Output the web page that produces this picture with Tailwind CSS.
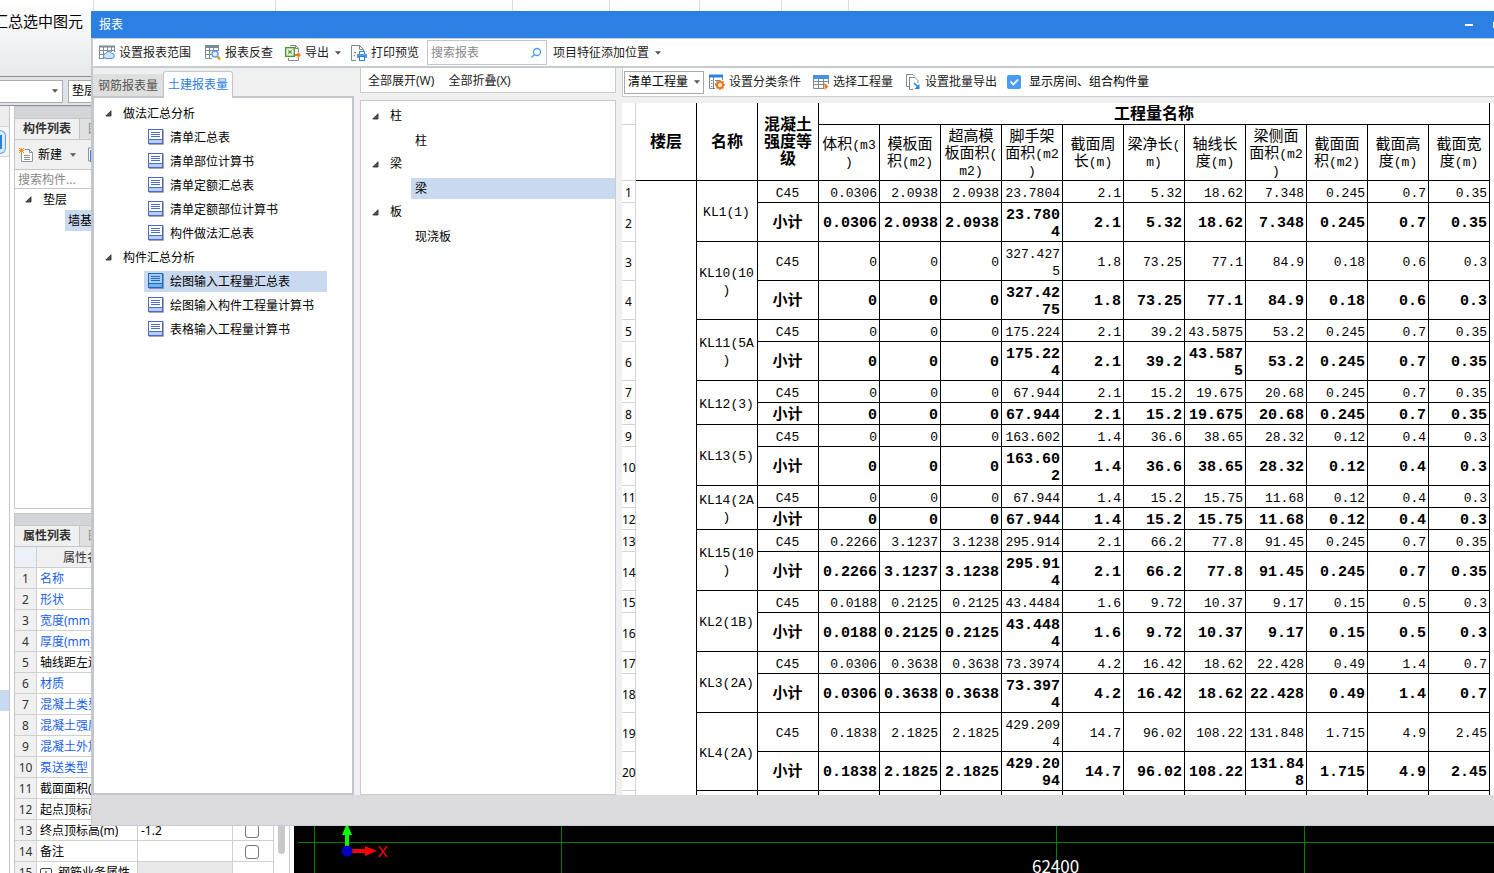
<!DOCTYPE html>
<html lang="zh-CN">
<head>
<meta charset="utf-8">
<title>报表</title>
<script src="https://cdn.jsdelivr.net/npm/@tailwindcss/browser@4"></script>
</head>
<body class="relative flex h-screen flex-col overflow-hidden bg-white font-['Noto_Sans','Noto_Sans_CJK_SC',sans-serif] text-xs leading-4 text-black">

<svg class="hidden">
  <symbol id="doc" viewBox="0 0 16 16">
    <path d="M15.500 1v14.500H1" fill="none" stroke="#a8a8a8"/>
    <rect x=".5" y=".5" width="14" height="14" fill="#fff" stroke="#4a6cc8"/>
    <rect x="1" y="10" width="13" height="4" fill="#b9ccff"/>
    <path d="M1 10.500h13M3 3.500h9M3 5.500h9M3 7.500h9" stroke="#4a6cc8"/>
  </symbol>
  <symbol id="doc-on" viewBox="0 0 16 16">
    <path d="M15.500 1v14.500H1" fill="none" stroke="#8096b4"/>
    <rect x=".5" y=".5" width="14" height="14" fill="#9fcbf5" stroke="#2468be"/>
    <rect x="1" y="10" width="13" height="4" fill="#6fb0f2"/>
    <path d="M1 10.500h13M3 3.500h9M3 5.500h9M3 7.500h9" stroke="#2468be"/>
  </symbol>
  <symbol id="open" viewBox="0 0 7 7"><path d="M6 .8v5.200H.8z" fill="#555" stroke="#222" stroke-width=".8"/></symbol>
  <symbol id="caret" viewBox="0 0 6 4"><path d="M0 .3h6L3 3.700z" fill="#555"/></symbol>
</svg>

<!-- main window: ribbon -->
<div class="flex h-[76px] flex-none bg-linear-to-b from-white to-[#e6eaed]">
  <div class="flex w-[83px] flex-none justify-end overflow-hidden pt-[11px] text-[15px] leading-5 whitespace-nowrap">汇总选中图元</div>
  <div class="flex h-[11px] flex-1 bg-white pl-[10px]">
    <div class="w-[182px] border-l border-[#dcdcdc]"></div><div class="w-[237px] border-l border-[#dcdcdc]"></div><div class="w-[97px] border-l border-[#dcdcdc]"></div><div class="w-[90px] border-l border-[#dcdcdc]"></div><div class="w-[82px] border-l border-[#dcdcdc]"></div><div class="w-[67px] border-l border-[#dcdcdc]"></div><div class="border-l border-[#dcdcdc]"></div>
  </div>
</div>
<div class="flex h-[30px] flex-none items-center gap-[5px] border-y border-[#8e9297] bg-[#e1e3e6]">
  <button class="flex h-[23px] w-[63px] items-center justify-end border border-l-0 border-[#a9adb2] bg-white pr-1" aria-label="楼层"><svg class="h-1 w-1.5"><use href="#caret"/></svg></button>
  <button class="h-[23px] w-24 border border-[#a9adb2] bg-white pl-[3px] text-left">垫层</button>
</div>

<div class="flex min-h-0 flex-1">
  <!-- navigation strip -->
  <div class="flex w-[10px] flex-none flex-col border-r border-[#c4c6cc]">
    <div class="h-5 bg-[#ededee]"></div>
    <div class="h-[31px] border-y border-[#d3d4d8] bg-[#f5f5f5] pt-[3px]"><div class="flex h-[24px] w-1.5 items-center rounded-r-md border border-l-0 border-[#5aa0ee] bg-[#dcebfb]"><div class="h-3.5 w-0.5 bg-[#2d80e3]"></div></div></div>
    <div class="h-[533px]"></div>
    <div class="h-[21px] bg-[#c9d9f0]"></div>
  </div>

  <!-- docked panels -->
  <div class="ml-1 flex w-[276px] flex-none flex-col">
    <section class="flex h-[403px] flex-none flex-col border border-[#c4c6cc]">
      <div class="h-[11px] flex-none bg-[#d3d5da]"></div>
      <div class="flex h-[22px] flex-none border-y border-[#c4c6cc] bg-[#e0e0e0] leading-5">
        <button class="w-[65px] border-r border-[#c4c6cc] bg-[#f0f0f0] font-bold text-[#333]">构件列表</button>
        <button class="px-2 text-[#888]">图纸管理</button>
      </div>
      <div class="flex h-[30px] flex-none items-center border-b border-[#c4c6cc] bg-[#f0f0f0] pl-1">
        <button class="flex items-center">
          <svg class="mr-1 h-4 w-[15px]" viewBox="0 0 15 16"><path d="M2.500 4v10.500h11v-9l-3-3h-5" fill="#fff" stroke="#8b959e"/><path d="M10.500 2.500v3h3M5 8.500h6M5 10.500h6M5 12.500h6" fill="none" stroke="#8b959e"/><path d="M0 1l5 5M5 1L0 6M2.500 1v5M0 3.500h5" stroke="#f0941e"/></svg>
          新建
          <svg class="ml-2 h-1 w-1.5"><use href="#caret"/></svg>
        </button>
        <svg class="ml-3 h-4 w-4" viewBox="0 0 16 16"><path d="M.5 1v13h12V1z" fill="#fff" stroke="#8b959e"/><path d="M2 3h13v12H2z" fill="#2d80e3"/></svg>
      </div>
      <input class="h-[19px] flex-none border-b border-[#c4c6cc] pl-[3px] placeholder:text-[#888]" placeholder="搜索构件..." aria-label="搜索构件">
      <ul class="leading-[21px]">
        <li class="flex items-center pl-2.5"><svg class="mr-[11px] h-[7px] w-[7px]"><use href="#open"/></svg>垫层</li>
        <li class="ml-[50px] bg-[#c9d9f0] pl-[3px]">墙基垫层</li>
      </ul>
    </section>

    <section class="mt-1 min-h-0 flex-1 overflow-hidden border border-b-0 border-[#c4c6cc]">
      <div class="h-[11px] bg-[#d3d5da]"></div>
      <div class="flex h-[22px] border-y border-[#c4c6cc] bg-[#e0e0e0] leading-5">
        <button class="w-[65px] border-r border-[#c4c6cc] bg-[#f0f0f0] font-bold text-[#333]">属性列表</button>
        <button class="px-2 text-[#888]">图层管理</button>
      </div>
      <div class="flex">
        <table class="w-[259px] table-fixed border-separate border-spacing-0 [&_td]:h-[21px] [&_td]:border-r [&_td]:border-b [&_td]:border-[#d0d0d0] [&_td]:p-0 [&_td]:pt-0.5 [&_td]:pl-[3px] [&_td]:whitespace-nowrap [&_th]:h-[21px] [&_th]:border-r [&_th]:border-b [&_th]:border-[#d0d0d0] [&_th]:bg-[#f0f0f0] [&_th]:p-0 [&_th]:pt-0.5 [&_th]:font-normal [&_th]:text-[#333]">
          <colgroup><col class="w-[22px]"><col class="w-[101px]"><col class="w-[95px]"><col class="w-[41px]"></colgroup>
          <thead><tr><th class="bg-[#edf1f7]!"><th>属性名称<th>属性值<th>附加</thead>
          <tbody class="text-[#1a5ff0]">
            <tr><th>1<td>名称<td><td>
            <tr><th>2<td>形状<td><td>
            <tr><th>3<td>宽度(mm)<td><td>
            <tr><th>4<td>厚度(mm)<td><td>
            <tr class="text-black"><th>5<td>轴线距左边线<td><td>
            <tr><th>6<td>材质<td><td>
            <tr><th>7<td>混凝土类型<td><td>
            <tr><th>8<td>混凝土强度<td><td>
            <tr><th>9<td>混凝土外加剂<td><td>
            <tr><th>10<td>泵送类型<td><td>
            <tr class="text-black"><th>11<td>截面面积(m²)<td><td>
            <tr class="text-black"><th>12<td>起点顶标高(m)<td><td>
            <tr class="text-black"><th>13<td>终点顶标高(m)<td>-1.2<td><input type="checkbox" aria-label="附加 终点顶标高" class="ml-[9px] block size-3.5 appearance-none rounded-[3px] border border-[#777] bg-white">
            <tr class="text-black"><th>14<td>备注<td><td><input type="checkbox" aria-label="附加 备注" class="ml-[9px] block size-3.5 appearance-none rounded-[3px] border border-[#777] bg-white">
            <tr class="text-black"><th>15<td><button class="mr-1.5 inline-block h-3 w-3 rounded-[2px] border border-[#444] text-center align-middle leading-[10px]">+</button>钢筋业务属性<td class="bg-[#e8e8e8]"><td>
          </tbody>
        </table>
        <div class="ml-1 h-[307px] w-[7px] rounded-full bg-[#c9c9c9]"></div>
      </div>
    </section>
  </div>

  <!-- drawing canvas -->
  <div class="ml-1 flex min-w-0 flex-1 items-end overflow-hidden bg-black">
    <svg class="h-[60px] w-[1200px] flex-none" viewBox="0 0 1200 60">
      <path d="M4 29.500h1196M20.500 0v60M267.500 0v60M762.500 0v60M1010.500 0v60" stroke="#008000" fill="none"/>
      <path d="M53 36V22" stroke="#0f0" stroke-width="4"/><path d="M48 22l5-12 5 12z" fill="#0f0"/>
      <path d="M53 38h18" stroke="#f00" stroke-width="4"/><path d="M71 33l12 5-12 5z" fill="#f00"/>
      <circle cx="53" cy="38" r="5.500" fill="#0000c0"/>
      <path d="M85 33l8 11M93 33l-8 11" stroke="#f00" stroke-width="1.300"/>
      <text x="738" y="60" font-size="17" fill="#fff" font-family="Noto Sans CJK SC">62400</text>
    </svg>
  </div>
</div>

<!-- report dialog -->
<div role="dialog" aria-label="报表" class="absolute top-[11px] right-0 bottom-[47px] left-[91px] flex flex-col overflow-hidden bg-[#f0f0f0]">
  <div class="flex h-[27px] flex-none items-center bg-[#2d80e3] pl-2 text-white">
    <h1>报表</h1>
    <button aria-label="最小化" class="ml-auto h-0.5 w-2 bg-white"></button>
    <button aria-label="最大化" class="ml-5 h-1.5 w-px bg-white"></button>
  </div>

  <div class="flex h-[30px] flex-none items-center border-t border-b-2 border-l-2 border-[#c6cad1] bg-white pl-1.5 whitespace-nowrap text-[#222]">
    <button class="mr-3.5 flex items-center gap-1">
      <svg class="size-4" viewBox="0 0 16 16"><path d="M.5 1v13M4.500 1v13M8.500 1v6M12.500 1v6M15.500 1v6M0 5.500h15M0 9.500h6M0 13.500h5" stroke="#7b8a96" fill="none"/><path d="M0 1.500h16" stroke="#7b8a96" stroke-width="2"/><path d="M7 13.500a2.500 2.500 0 010-5 3 3 0 015.500-.2 2.600 2.600 0 01.5 5.200z" fill="#cfe3fa" stroke="#4a8fe0"/></svg>设置报表范围</button>
    <button class="mr-3 flex items-center gap-1">
      <svg class="size-4" viewBox="0 0 16 16"><path d="M.5 2v11.500H7M4.500 2v11M8.500 2v4M13.500 2v4M0 5.500h14M0 9.500h7" stroke="#7b8a96" fill="none"/><path d="M0 1.500h14" stroke="#7b8a96" stroke-width="3"/><circle cx="10" cy="9" r="3" fill="#e6f0fc" stroke="#5b9be6" stroke-width="1.300"/><path d="M12.500 11.500l2.500 3" stroke="#f0941e" stroke-width="2.500"/></svg>报表反查</button>
    <button class="mr-2.5 flex items-center gap-1">
      <svg class="size-4" viewBox="0 0 16 16"><path d="M3.500 13v2.500h10V13M5 .5h5.500l3 3V7M10.500 .5v3h3" fill="none" stroke="#7b8a96"/><rect x=".7" y="2.700" width="8.600" height="8.600" fill="#fff" stroke="#4c9a2a" stroke-width="1.400"/><path d="M3 4.500l4 5M7 4.500l-4 5M3 7h4" stroke="#4c9a2a"/><path d="M10 9h2.500V6.500L16 10l-3.500 3.500V11H10z" fill="#f07820"/></svg>导出<svg class="ml-0.5 h-1 w-1.5"><use href="#caret"/></svg></button>
    <button class="mr-2 flex items-center gap-1">
      <svg class="size-4" viewBox="0 0 16 16"><path d="M5 15.500H.5V.5h8l4 4V6M8.500 .5v4h4" fill="none" stroke="#7b8a96"/><path d="M3 7.500h2M3 10.500h1" stroke="#7b8a96" stroke-width="1.500"/><path d="M8.500 9V6.500h5V9" fill="#fff" stroke="#2d80e3"/><rect x="6" y="9" width="10" height="4" fill="#5b9be6"/><rect x="8.500" y="11.500" width="5" height="4" fill="#fff" stroke="#2d80e3"/></svg>打印预览</button>
    <div class="mr-1.5 flex h-[25px] w-[120px] items-center border border-[#c0c6ce]">
      <input class="w-24 flex-none pl-[3px] placeholder:text-[#888]" placeholder="搜索报表" aria-label="搜索报表">
      <button aria-label="搜索" class="ml-1.5"><svg class="size-3" viewBox="0 0 12 12"><circle cx="7" cy="5" r="3.500" fill="none" stroke="#4a9ae8" stroke-width="1.300"/><path d="M4.500 7.500L1.500 10.500" stroke="#4a9ae8" stroke-width="1.500"/></svg></button>
    </div>
    <button class="flex items-center gap-1.5">项目特征添加位置<svg class="h-1 w-1.5"><use href="#caret"/></svg></button>
  </div>

  <div class="flex min-h-0 flex-1 gap-1.5 border-l-2 border-[#c3c7cc]">
    <!-- report tree -->
    <div class="flex w-[261px] flex-none flex-col">
      <div class="flex h-7 flex-none items-end">
        <button class="h-[22px] w-[70px] bg-[#dfdfdf] pt-0.5 text-center text-[#555]">钢筋报表量</button>
        <button class="relative -mb-0.5 h-[27px] w-[70px] rounded-t-[3px] border border-b-0 border-[#c3c7cc] bg-white text-center text-[#2d80e3]">土建报表量</button>
      </div>
      <ul class="flex-1 border-2 border-l border-[#c3c7cc] bg-white pt-[3px] leading-[21px] [&_a]:flex [&_a]:h-[21px] [&_a]:w-[183px] [&_a]:items-center [&_a]:gap-1.5 [&_a]:pl-1 [&_li]:flex [&_li]:h-6 [&_li]:items-center [&_li]:whitespace-nowrap">
        <li class="gap-[11px] pl-[11px]"><svg class="size-[7px]"><use href="#open"/></svg>做法汇总分析</li>
        <li class="pl-[50px]"><a href="#"><svg class="size-4"><use href="#doc"/></svg>清单汇总表</a></li>
        <li class="pl-[50px]"><a href="#"><svg class="size-4"><use href="#doc"/></svg>清单部位计算书</a></li>
        <li class="pl-[50px]"><a href="#"><svg class="size-4"><use href="#doc"/></svg>清单定额汇总表</a></li>
        <li class="pl-[50px]"><a href="#"><svg class="size-4"><use href="#doc"/></svg>清单定额部位计算书</a></li>
        <li class="pl-[50px]"><a href="#"><svg class="size-4"><use href="#doc"/></svg>构件做法汇总表</a></li>
        <li class="gap-[11px] pl-[11px]"><svg class="size-[7px]"><use href="#open"/></svg>构件汇总分析</li>
        <li class="pl-[50px]"><a href="#" class="bg-[#c9d9f0]"><svg class="size-4"><use href="#doc-on"/></svg>绘图输入工程量汇总表</a></li>
        <li class="pl-[50px]"><a href="#"><svg class="size-4"><use href="#doc"/></svg>绘图输入构件工程量计算书</a></li>
        <li class="pl-[50px]"><a href="#"><svg class="size-4"><use href="#doc"/></svg>表格输入工程量计算书</a></li>
      </ul>
    </div>

    <!-- component tree -->
    <div class="flex w-64 flex-none flex-col gap-[7px]">
      <div class="flex h-[25px] flex-none items-center gap-3.5 border border-t-0 border-[#c6cad1] bg-white pt-0.5 pl-[7px] text-[#222]">
        <button>全部展开(W)</button>
        <button>全部折叠(X)</button>
      </div>
      <ul class="flex-1 border border-[#c6cad1] bg-white pt-[3px] [&_a]:h-[21px] [&_a]:flex-1 [&_a]:pl-1 [&_a]:leading-[21px] [&_li]:flex [&_li]:h-6 [&_li]:items-center">
        <li class="gap-[11px] pl-[11px]"><svg class="size-[7px]"><use href="#open"/></svg>柱</li>
        <li class="pl-[50px]"><a href="#">柱</a></li>
        <li class="gap-[11px] pl-[11px]"><svg class="size-[7px]"><use href="#open"/></svg>梁</li>
        <li class="pl-[50px]"><a href="#" class="bg-[#c9d9f0]">梁</a></li>
        <li class="gap-[11px] pl-[11px]"><svg class="size-[7px]"><use href="#open"/></svg>板</li>
        <li class="pl-[50px]"><a href="#">现浇板</a></li>
      </ul>
    </div>

    <!-- report -->
    <div class="flex min-w-0 flex-1 flex-col gap-1.5">
      <div class="flex h-[29px] flex-none items-center border-b border-l border-[#c6cad1] bg-white pl-px whitespace-nowrap text-[#222]">
        <div class="relative mr-[5px] flex items-center">
          <select aria-label="工程量类型" class="h-[23px] w-20 appearance-none border border-[#a9a9a9] bg-white pl-[3px] text-black"><option>清单工程量</option></select>
          <svg class="pointer-events-none absolute right-1 h-1 w-1.5"><use href="#caret"/></svg>
        </div>
        <button class="mr-3 flex items-center gap-1">
          <svg class="size-4" viewBox="0 0 16 16"><path d="M.5 2v12.500H6M4.500 2v12M13.500 2v4" fill="none" stroke="#7b8a96"/><path d="M2 6.500h1.500M2 9.500h1.500M2 12.500h1.500M6 6.500h5M6 9.500h1" stroke="#7b8a96"/><path d="M0 2h14" stroke="#2d80e3" stroke-width="3"/><circle cx="11" cy="11" r="3" fill="#fff" stroke="#f07820" stroke-width="2"/><path d="M11 6v2M11 14v2M6 11h2M14 11h2M7.500 7.500l1.400 1.400M13.100 13.100l1.400 1.400M14.500 7.500l-1.400 1.400M8.900 13.100l-1.400 1.400" stroke="#f07820" stroke-width="1.600"/></svg>设置分类条件</button>
        <button class="mr-3 flex items-center gap-1">
          <svg class="size-4" viewBox="0 0 16 16"><path d="M.5 3v11.500H11M5.500 4v10M10.500 4v10M15.500 3v7M0 7.500h15M0 10.500h12" fill="none" stroke="#7b8a96"/><path d="M0 3h16" stroke="#4a90e2" stroke-width="4"/><path d="M11.500 9l4 3.500-4 3.500z" fill="#f07820"/></svg>选择工程量</button>
        <button class="mr-2.5 flex items-center gap-1">
          <svg class="size-4" viewBox="0 0 16 16"><path d="M4 12.500H1.500V.5H8l2 2M4.500 3v12.500H8M4.500 3.500H10l3 3V9" fill="none" stroke="#7b8a96"/><path d="M9 9l4 4" stroke="#2d80e3" stroke-width="1.600"/><path d="M14.500 10v5h-5z" fill="#2d80e3"/></svg>设置批量导出</button>
        <input id="rooms" type="checkbox" checked class="peer size-3.5 appearance-none rounded-[2px] bg-[#4a9bf5]">
        <svg class="pointer-events-none -ml-3.5 size-3.5" viewBox="0 0 14 14"><path d="M3.500 6.500l2.800 3L11 4.500" fill="none" stroke="#fff" stroke-width="1.800"/></svg>
        <label for="rooms" class="ml-2 text-black">显示房间、组合构件量</label>
      </div>

      <div class="min-h-0 flex-1 overflow-hidden bg-white">
        <table class="w-[868px] table-fixed border-separate border-spacing-0 font-['Liberation_Mono','Noto_Sans_CJK_SC',monospace] text-[13px] leading-[17px] [&_i]:text-[15px] [&_i]:not-italic [&_td]:border-r [&_td]:border-b [&_td]:border-black [&_td]:p-0 [&_td]:pt-[3px] [&_td]:pr-0.5 [&_td]:pl-px [&_td]:text-right [&_td]:[line-break:anywhere] [&_td:nth-last-child(12)]:text-center [&_td[rowspan]]:text-center [&_th]:border-r [&_th]:border-b [&_th]:p-0 [&_th]:pt-[3px]">
          <colgroup><col class="w-[14px]"><col span="14" class="w-[61px]"></colgroup>
          <thead class="[&_th]:border-black">
            <tr class="h-[22px] text-base leading-[17px] [&_th]:pt-1">
              <th class="border-[#d4d4d4]!">
              <th rowspan="2">楼层<th rowspan="2">名称<th rowspan="2">混凝土<br>强度等<br>级<th colspan="11">工程量名称
            <tr class="h-14 [&_th]:font-normal">
              <th class="border-[#d4d4d4]!">
              <th><i>体积</i>(m3<br>)
              <th><i>模板面<br>积</i>(m2)
              <th><i>超高模<br>板面积</i>(<br>m2)
              <th><i>脚手架<br>面积</i>(m2<br>)
              <th><i>截面周<br>长</i>(m)
              <th><i>梁净长</i>(<br>m)
              <th><i>轴线长<br>度</i>(m)
              <th><i>梁侧面<br>面积</i>(m2<br>)
              <th><i>截面面<br>积</i>(m2)
              <th><i>截面高<br>度</i>(m)
              <th><i>截面宽<br>度</i>(m)
          </thead>
          <tbody class="[&_td[rowspan]]:text-[13px] [&_td[rowspan]]:font-normal [&_th]:border-[#d4d4d4] [&_th]:font-['Noto_Sans'] [&_th]:text-xs [&_th]:font-normal">
            <tr class="h-[22px]"><th>1<td rowspan="21"><td rowspan="2">KL1(1)<td>C45<td>0.0306<td>2.0938<td>2.0938<td>23.7804<td>2.1<td>5.32<td>18.62<td>7.348<td>0.245<td>0.7<td>0.35
            <tr class="h-[39px] text-[15px] font-bold"><th>2<td>小计<td>0.0306<td>2.0938<td>2.0938<td>23.7804<td>2.1<td>5.32<td>18.62<td>7.348<td>0.245<td>0.7<td>0.35
            <tr class="h-[39px]"><th>3<td rowspan="2">KL10(10)<td>C45<td>0<td>0<td>0<td>327.4275<td>1.8<td>73.25<td>77.1<td>84.9<td>0.18<td>0.6<td>0.3
            <tr class="h-[39px] text-[15px] font-bold"><th>4<td>小计<td>0<td>0<td>0<td>327.4275<td>1.8<td>73.25<td>77.1<td>84.9<td>0.18<td>0.6<td>0.3
            <tr class="h-[22px]"><th>5<td rowspan="2">KL11(5A)<td>C45<td>0<td>0<td>0<td>175.224<td>2.1<td>39.2<td>43.5875<td>53.2<td>0.245<td>0.7<td>0.35
            <tr class="h-[39px] text-[15px] font-bold"><th>6<td>小计<td>0<td>0<td>0<td>175.224<td>2.1<td>39.2<td>43.5875<td>53.2<td>0.245<td>0.7<td>0.35
            <tr class="h-[22px]"><th>7<td rowspan="2">KL12(3)<td>C45<td>0<td>0<td>0<td>67.944<td>2.1<td>15.2<td>19.675<td>20.68<td>0.245<td>0.7<td>0.35
            <tr class="h-[22px] text-[15px] font-bold"><th>8<td>小计<td>0<td>0<td>0<td>67.944<td>2.1<td>15.2<td>19.675<td>20.68<td>0.245<td>0.7<td>0.35
            <tr class="h-[22px]"><th>9<td rowspan="2">KL13(5)<td>C45<td>0<td>0<td>0<td>163.602<td>1.4<td>36.6<td>38.65<td>28.32<td>0.12<td>0.4<td>0.3
            <tr class="h-[39px] text-[15px] font-bold"><th>10<td>小计<td>0<td>0<td>0<td>163.602<td>1.4<td>36.6<td>38.65<td>28.32<td>0.12<td>0.4<td>0.3
            <tr class="h-[22px]"><th>11<td rowspan="2">KL14(2A)<td>C45<td>0<td>0<td>0<td>67.944<td>1.4<td>15.2<td>15.75<td>11.68<td>0.12<td>0.4<td>0.3
            <tr class="h-[22px] text-[15px] font-bold"><th>12<td>小计<td>0<td>0<td>0<td>67.944<td>1.4<td>15.2<td>15.75<td>11.68<td>0.12<td>0.4<td>0.3
            <tr class="h-[22px]"><th>13<td rowspan="2">KL15(10)<td>C45<td>0.2266<td>3.1237<td>3.1238<td>295.914<td>2.1<td>66.2<td>77.8<td>91.45<td>0.245<td>0.7<td>0.35
            <tr class="h-[39px] text-[15px] font-bold"><th>14<td>小计<td>0.2266<td>3.1237<td>3.1238<td>295.914<td>2.1<td>66.2<td>77.8<td>91.45<td>0.245<td>0.7<td>0.35
            <tr class="h-[22px]"><th>15<td rowspan="2">KL2(1B)<td>C45<td>0.0188<td>0.2125<td>0.2125<td>43.4484<td>1.6<td>9.72<td>10.37<td>9.17<td>0.15<td>0.5<td>0.3
            <tr class="h-[39px] text-[15px] font-bold"><th>16<td>小计<td>0.0188<td>0.2125<td>0.2125<td>43.4484<td>1.6<td>9.72<td>10.37<td>9.17<td>0.15<td>0.5<td>0.3
            <tr class="h-[22px]"><th>17<td rowspan="2">KL3(2A)<td>C45<td>0.0306<td>0.3638<td>0.3638<td>73.3974<td>4.2<td>16.42<td>18.62<td>22.428<td>0.49<td>1.4<td>0.7
            <tr class="h-[39px] text-[15px] font-bold"><th>18<td>小计<td>0.0306<td>0.3638<td>0.3638<td>73.3974<td>4.2<td>16.42<td>18.62<td>22.428<td>0.49<td>1.4<td>0.7
            <tr class="h-[39px]"><th>19<td rowspan="2">KL4(2A)<td>C45<td>0.1838<td>2.1825<td>2.1825<td>429.2094<td>14.7<td>96.02<td>108.22<td>131.848<td>1.715<td>4.9<td>2.45
            <tr class="h-[39px] text-[15px] font-bold"><th>20<td>小计<td>0.1838<td>2.1825<td>2.1825<td>429.2094<td>14.7<td>96.02<td>108.22<td>131.848<td>1.715<td>4.9<td>2.45
            <tr class="h-[22px]"><th><td><td><td><td><td><td><td><td><td><td><td><td><td>
          </tbody>
        </table>
      </div>
    </div>
  </div>
  <div class="h-[31px] flex-none border-b border-l border-[#c6cad1] bg-[#dcdcde]"></div>
</div>
</body>
</html>
